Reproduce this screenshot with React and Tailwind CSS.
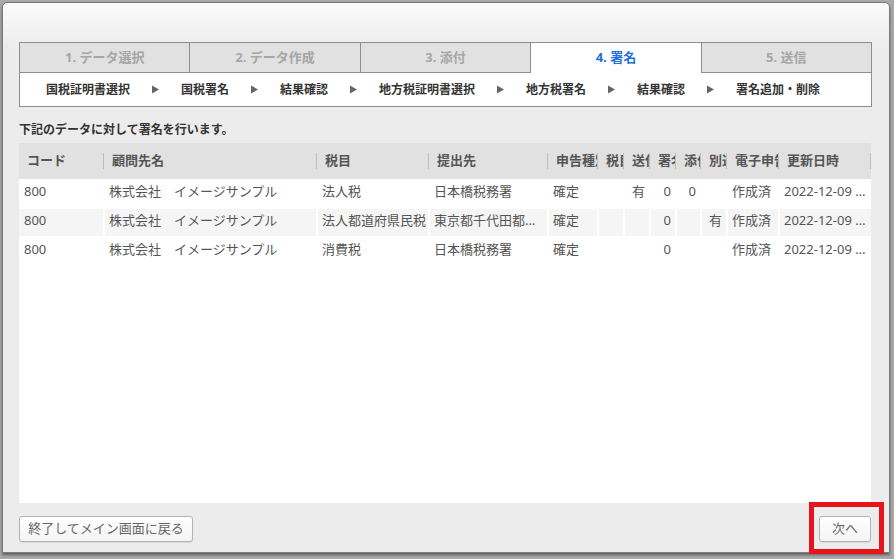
import React from 'react';

const font = { fontFamily: '"Noto Sans", "Noto Sans CJK JP", sans-serif' };

const tabs = ['1. データ選択', '2. データ作成', '3. 添付', '4. 署名', '5. 送信'];
const steps = ['国税証明書選択', '国税署名', '結果確認', '地方税証明書選択', '地方税署名', '結果確認', '署名追加・削除'];

const cols = [
  { label: 'コード', w: 'w-[84px]' },
  { label: '顧問先名', w: 'w-[213px]' },
  { label: '税目', w: 'w-[112px]' },
  { label: '提出先', w: 'w-[119px]' },
  { label: '申告種別', w: 'w-[50px]' },
  { label: '税目', w: 'w-[26px]', num: true },
  { label: '送信', w: 'w-[26px]', num: true },
  { label: '署名', w: 'w-[26px]', num: true },
  { label: '添付', w: 'w-[25px]', num: true },
  { label: '別送', w: 'w-[26px]', num: true },
  { label: '電子申告', w: 'w-[52px]' },
  { label: '更新日時', w: 'w-[93px]' },
];

const rows = [
  ['800', '株式会社　イメージサンプル', '法人税', '日本橋税務署', '確定', '', '有', '0', '0', '', '作成済', '2022-12-09 14:35:21'],
  ['800', '株式会社　イメージサンプル', '法人都道府県民税', '東京都千代田都税事務所', '確定', '', '', '0', '', '有', '作成済', '2022-12-09 14:35:21'],
  ['800', '株式会社　イメージサンプル', '消費税', '日本橋税務署', '確定', '', '', '0', '', '', '作成済', '2022-12-09 14:35:21'],
];

function Arrow() {
  return (
    <svg width="7" height="9" viewBox="0 0 7 9" className="shrink-0">
      <path d="M0 0.5 L7 4.5 L0 8.5 Z" fill="#666" />
    </svg>
  );
}

export default function App() {
  return (
    <div className="relative w-[894px] h-[559px] overflow-hidden bg-[#a9a9a9] pt-[2px] pl-[2px]" style={font}>
      {/* dialog */}
      <div className="w-[888px] h-[551px] flex flex-col rounded-t-[5px] border border-[#7a7a7a] bg-gradient-to-b from-[#fbfbfb] from-0% to-[#ececec] to-[8%] pt-[39px] pl-[16px] pr-[17px] shadow-[0_2px_3px_rgba(0,0,0,0.45)]">
        {/* wizard tabs */}
        <div className="border border-[#8e8e8e] bg-white">
          <div className="flex h-[30px]">
            {tabs.map((t, i) => {
              const active = i === 3;
              return (
                <div
                  key={t}
                  className={`flex-1 flex items-center justify-center text-[13px] font-bold ${i > 0 ? 'border-l border-[#8e8e8e]' : ''} ${
                    active ? 'bg-white text-[#1f6fe0]' : 'bg-[#e1e1e1] text-[#a6a6a6] border-b'
                  } border-b-[#8e8e8e]`}
                >
                  {t}
                </div>
              );
            })}
          </div>
          <div className="flex items-center h-[33px] pl-[26px] gap-[22px] text-[12px] font-bold text-[#333]">
            {steps.map((s, i) => (
              <React.Fragment key={i}>
                {i > 0 && <Arrow />}
                <span className="whitespace-nowrap">{s}</span>
              </React.Fragment>
            ))}
          </div>
        </div>

        <div className="mt-[15px] text-[12px] leading-[16px] font-bold text-[#333]">下記のデータに対して署名を行います。</div>

        {/* table */}
        <div className="mt-[5px] h-[360px] w-[852px] bg-white flex flex-col">
          <div className="flex h-[36px] bg-[#e1e1e1] text-[13px] font-bold text-[#555]">
            {cols.map((c, i) => (
              <div key={i} className={`${c.w} shrink-0 flex items-center overflow-hidden`}>
                {i > 0 && <div className="w-px h-[16px] bg-[#bdbdbd] shrink-0" />}
                <span className="whitespace-nowrap overflow-hidden pl-[8px] flex-1">{c.label}</span>
                {i === cols.length - 1 && <div className="w-px h-[16px] bg-[#bdbdbd] shrink-0" />}
              </div>
            ))}
          </div>
          {rows.map((r, ri) => (
            <div key={ri} className="flex h-[29px] text-[13px] text-[#555]">
              {r.map((v, ci) => {
                const c = cols[ci];
                return (
                  <div
                    key={ci}
                    className={`${c.w} shrink-0 flex items-center pb-[3px] border-y ${ci > 0 ? 'border-l-2' : ''} border-white ${
                      ri === 1 ? 'bg-[#f5f5f5]' : 'bg-white'
                    } ${c.num ? 'justify-end pr-[4px]' : ci === 0 ? 'pl-[5px]' : 'pl-[4px]'}`}
                  >
                    <span className="truncate">{v}</span>
                  </div>
                );
              })}
            </div>
          ))}
        </div>

        {/* footer */}
        <div className="flex justify-between w-[852px] pt-[13px]">
          <button className="w-[174px] h-[26px] rounded-[3px] border border-[#b4b4b4] bg-gradient-to-b from-white to-[#f4f4f4] text-[13px] text-[#666] shadow-[0_1px_1px_rgba(0,0,0,0.08)]">
            終了してメイン画面に戻る
          </button>
          <button className="w-[52px] h-[26px] rounded-[3px] border border-[#b4b4b4] bg-gradient-to-b from-white to-[#f4f4f4] text-[13px] text-[#666] shadow-[0_1px_1px_rgba(0,0,0,0.08)]">
            次へ
          </button>
        </div>
      </div>

      {/* annotation highlight */}
      <div className="absolute left-[809px] top-[502px] w-[75px] h-[52px] border-[5px] border-[#e8141c]" />
    </div>
  );
}
